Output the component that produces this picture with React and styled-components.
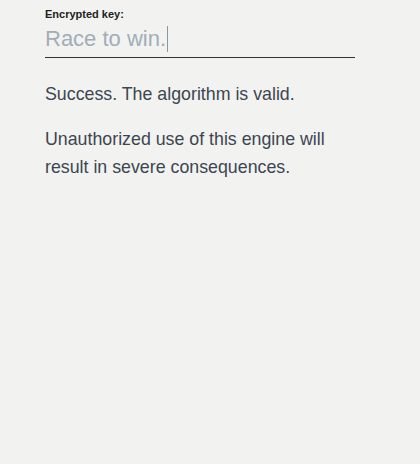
import React from 'react';
import styled, { createGlobalStyle } from 'styled-components';

const Global = createGlobalStyle`
  html, body {
    margin: 0;
    padding: 0;
    background: #f2f2f0;
  }
`;

const App = () => {
  return (
    <Page>
      <Global />
      <Field>
        <Label>Encrypted key:</Label>
        <InputLine>
          <Placeholder>Race to win.</Placeholder>
          <Caret />
        </InputLine>
      </Field>
      <Message>Success. The algorithm is valid.</Message>
      <Message>Unauthorized use of this engine will result in severe consequences.</Message>
    </Page>
  );
};

export default App;

const Page = styled.div`
  min-height: 464px;
  box-sizing: border-box;
  padding: 8px 0 0 45px;
  font-family: 'Liberation Sans', Arial, sans-serif;
  color: #3c4651;
`;

const Field = styled.div`
  width: 310px;
  margin-bottom: 22px;
`;

const Label = styled.div`
  font-size: 11px;
  font-weight: bold;
  color: #222;
  line-height: 13px;
`;

const InputLine = styled.div`
  display: flex;
  align-items: center;
  height: 36px;
  border-bottom: 1px solid #333;
`;

const Placeholder = styled.span`
  font-size: 22px;
  font-weight: 300;
  color: #a3adb8;
`;

const Caret = styled.span`
  width: 1px;
  height: 26px;
  margin-left: 1px;
  background: #8a96a3;
`;

const Message = styled.p`
  width: 310px;
  margin: 0 0 17px;
  font-size: 17.8px;
  line-height: 28px;
`;
